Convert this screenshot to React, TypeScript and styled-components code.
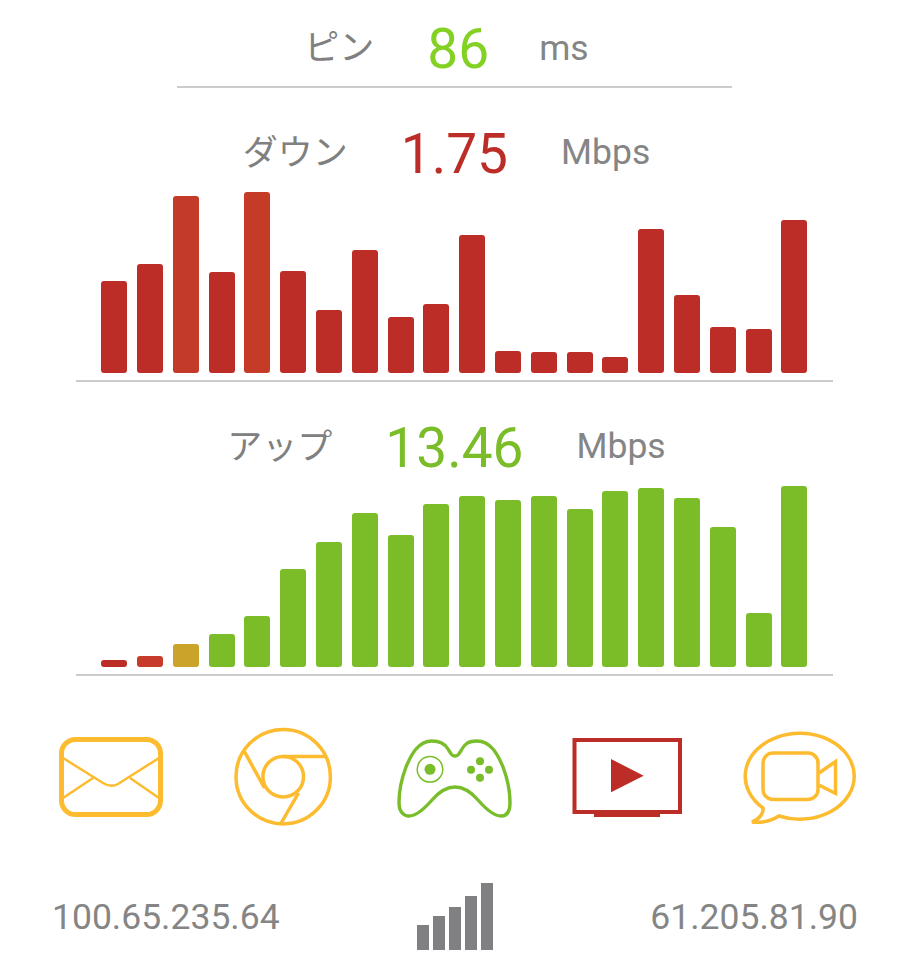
import React from "react";
import styled, { createGlobalStyle } from "styled-components";

const RED = "#bb2d26";
const GREEN = "#7abd28";
const AMBER = "#fdbb2f";
const GAME = "#79bd2a";

const Global = createGlobalStyle`
  html, body { margin: 0; padding: 0; background: #fff; }
  body { font-family: Roboto, "Noto Sans CJK JP", sans-serif; color: #808080; }
`;

const Page = styled.main`
  width: 909px;
  height: 960px;
  display: flex;
  flex-direction: column;
  align-items: center;
  overflow: hidden;
`;

const ReadingRow = styled.div<{ $height: number; $top: number }>`
  height: ${(p) => p.$height}px;
  width: 100%;
  padding: ${(p) => p.$top}px 16px 0 0;
  box-sizing: border-box;
  flex: none;
  display: flex;
  justify-content: center;
  align-items: center;
  gap: 53px;
`;

const Label = styled.span`
  font-family: "Noto Sans CJK JP", sans-serif;
  font-weight: 400;
  font-size: 35px;
  line-height: 40px;
  margin-bottom: 4px;
  color: #808080;
`;

const Value = styled.span<{ $color: string }>`
  font-family: Roboto, sans-serif;
  font-weight: 400;
  font-size: 55px;
  line-height: 60px;
  margin-top: 3px;
  color: ${(p) => p.$color};
`;

const Unit = styled.span`
  font-family: Roboto, sans-serif;
  font-size: 35.5px;
  line-height: 40px;
  color: #858585;
`;

const PingUnit = styled(Unit)`
  margin-left: -3px;
  margin-top: 2px;
`;

const PingRule = styled.hr`
  width: 555px;
  height: 2px;
  margin: 0;
  border: 0;
  background: #cccccc;
  flex: none;
`;

const Chart = styled.div`
  width: 757px;
  height: 190px;
  flex: none;
  box-sizing: border-box;
  padding: 0 0.5px 7px 0;
  border-bottom: 2px solid #cccccc;
  display: flex;
  align-items: flex-end;
  justify-content: center;
  gap: 9.8px;
`;

const Bar = styled.div<{ $color: string }>`
  width: 26px;
  flex: none;
  border-radius: 3px;
  background: ${(p) => p.$color};
`;

const IconRow = styled.div`
  margin-top: 46px;
  width: 860px;
  flex: none;
  display: grid;
  grid-template-columns: repeat(5, 172px);
  justify-items: center;
`;

const Icon = styled.svg`
  width: 130px;
  height: 110px;
  display: block;
  fill: none;
`;

const Footer = styled.footer`
  margin-top: 50px;
  width: 806px;
  margin-left: 1px;
  flex: none;
  display: grid;
  grid-template-columns: 1fr auto 1fr;
  align-items: end;
`;

const Ip = styled.span<{ $end?: boolean }>`
  font-family: Roboto, sans-serif;
  font-size: 35.5px;
  line-height: 40px;
  color: #858585;
  text-align: ${(p) => (p.$end ? "right" : "left")};
  padding-bottom: 13px;
`;

const Signal = styled.div`
  display: flex;
  align-items: flex-end;
  gap: 4px;
  height: 68px;
`;

const SignalBar = styled.div`
  width: 12px;
  background: #808083;
`;

const down: [number, string?][] = [
  [281], [264], [196, "#c43a28"], [272], [192, "#c63b27"], [271], [310], [250], [317], [304],
  [235], [351], [352], [352], [357], [229], [295], [327], [329], [220],
];
const up: [number, string?][] = [
  [660, RED], [656, "#c63b2a"], [644, "#cba328"], [634], [616], [569], [542], [513], [535], [504],
  [496], [500], [496], [509], [491], [488], [498], [527], [613], [486],
];

export default function App() {
  return (
    <Page>
      <Global />
      <ReadingRow $height={86} $top={8}>
        <Label>ピン</Label>
        <Value $color="#83d123">86</Value>
        <PingUnit>ms</PingUnit>
      </ReadingRow>
      <PingRule />
      <ReadingRow $height={104} $top={24}>
        <Label>ダウン</Label>
        <Value $color={RED}>1.75</Value>
        <Unit>Mbps</Unit>
      </ReadingRow>
      <Chart>
        {down.map(([top, c], i) => (
          <Bar key={i} $color={c ?? RED} style={{ height: 373 - top }} />
        ))}
      </Chart>
      <ReadingRow $height={104} $top={24}>
        <Label>アップ</Label>
        <Value $color={GREEN}>13.46</Value>
        <Unit>Mbps</Unit>
      </ReadingRow>
      <Chart>
        {up.map(([top, c], i) => (
          <Bar key={i} $color={c ?? GREEN} style={{ height: 667 - top }} />
        ))}
      </Chart>
      <IconRow>
        <Icon viewBox="46 722 130 110">
          <g stroke={AMBER}>
            <rect x="61.5" y="739.5" width="99" height="75" rx="14" strokeWidth="5" />
            <path d="M63 758 L103 783 Q111 788 118 784 L159 758 M63 798 L93 778 M130 778 L159 798" strokeWidth="2.5" />
          </g>
        </Icon>
        <Icon viewBox="217.5 722 130 110">
          <g stroke={AMBER} strokeWidth="3.5">
            <circle cx="282.7" cy="776.7" r="47.2" />
            <circle cx="282.7" cy="776.7" r="20.3" />
            <path d="M244 751.7 L264 788 M282 756.4 L325 756.4 M298 793 L280.7 823" />
          </g>
        </Icon>
        <Icon viewBox="390 722 130 110">
          <path
            d="M455 756 C452 756 451 754 448 749 C445 744 441 741 432 741 C418 741 411 755 406 767 C401 780 399 792 399 803 C399 811 403 816 409 816 C417 816 425 808 432 800 C439 792 446 787 455 787 C464 787 471 792 478 800 C485 808 493 816 501 816 C507 816 510 811 510 803 C510 792 508 780 503 767 C498 755 491 741 477 741 C468 741 465 744 462 749 C459 754 458 756 455 756 Z"
            stroke={GAME}
            strokeWidth="3.4"
          />
          <circle cx="430" cy="769.3" r="12.8" stroke={GAME} strokeWidth="1.5" />
          <g fill={GAME}>
            <circle cx="430" cy="769.3" r="5.5" />
            <circle cx="480" cy="761.3" r="4" />
            <circle cx="471" cy="769.7" r="4" />
            <circle cx="489" cy="769.7" r="4" />
            <circle cx="480" cy="777.7" r="4" />
          </g>
        </Icon>
        <Icon viewBox="561 722 130 110">
          <rect x="573.5" y="740" width="105.5" height="72" stroke={RED} strokeWidth="4" />
          <path d="M593 813 H659 V817 H593 Z M610 759 L642.7 775.7 L610 792.3 Z" fill={RED} />
        </Icon>
        <Icon viewBox="733 722 130 110">
          <g stroke={AMBER} strokeWidth="3.5">
            <path d="M778 816 A 54.5 43 0 1 0 762 808 C 763 814 757 820 751 822 C 760 823 770 821 778 816 Z" />
            <rect x="762" y="753" width="55" height="46.5" rx="10" />
            <path d="M818 773 L834.5 761.5 V793.5 L818 785" />
          </g>
        </Icon>
      </IconRow>
      <Footer>
        <Ip>100.65.235.64</Ip>
        <Signal>
          {[25, 34, 43, 54, 67].map((h) => (
            <SignalBar key={h} style={{ height: h }} />
          ))}
        </Signal>
        <Ip $end>61.205.81.90</Ip>
      </Footer>
    </Page>
  );
}
